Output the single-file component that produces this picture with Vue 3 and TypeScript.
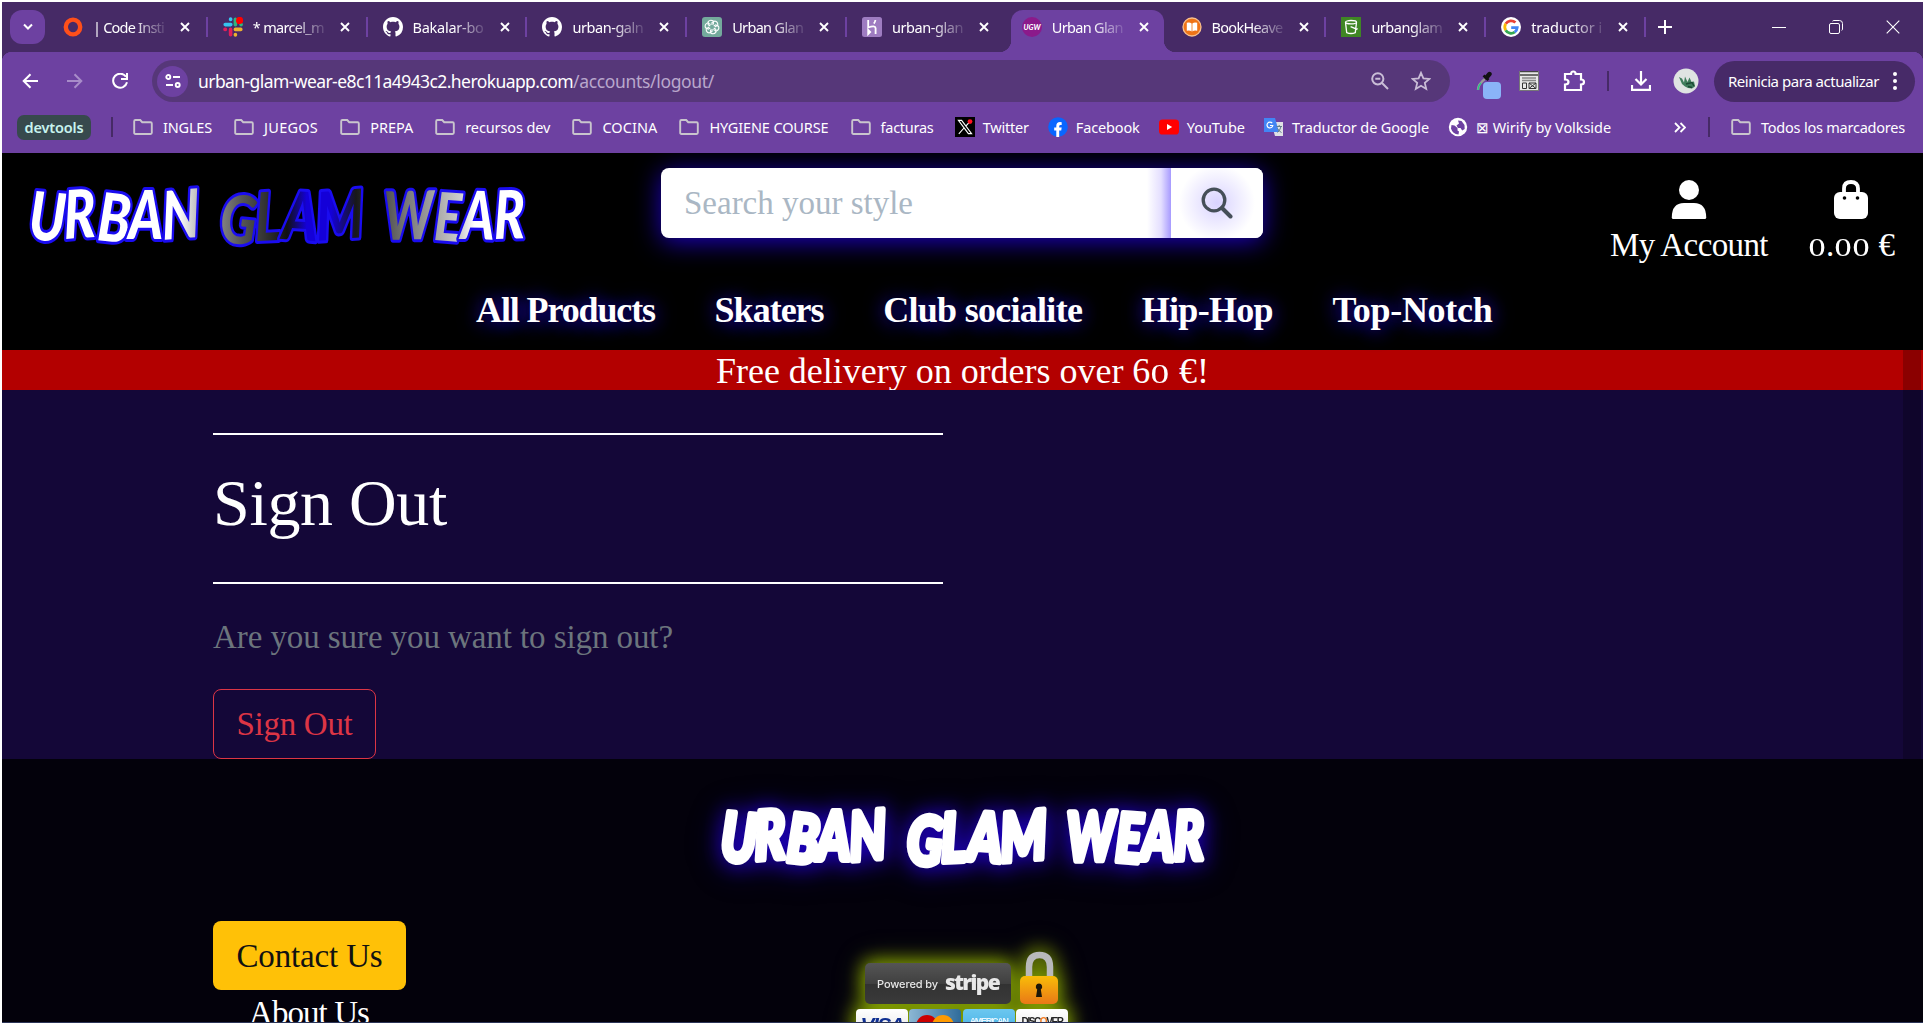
<script setup lang="ts">
interface Tab { title: string; icon: string; active?: boolean; line?: boolean }
interface Bookmark { label: string; icon: string; width: number }

const tabs: Tab[] = [
  { title: '| Code Insti', icon: 'ring', line: true },
  { title: '* marcel_m', icon: 'slack', line: true },
  { title: 'Bakalar-bo', icon: 'github', line: true },
  { title: 'urban-galn', icon: 'github', line: true },
  { title: 'Urban Glan', icon: 'gpt', line: true },
  { title: 'urban-glan', icon: 'heroku' },
  { title: 'Urban Glan', icon: 'ugw', active: true },
  { title: 'BookHeave', icon: 'book', line: true },
  { title: 'urbanglam', icon: 'bucket', line: true },
  { title: 'traductor i', icon: 'google', line: true },
]

const bookmarks: Bookmark[] = [
  { label: 'INGLES', icon: 'folder', width: 49 },
  { label: 'JUEGOS', icon: 'folder', width: 54 },
  { label: 'PREPA', icon: 'folder', width: 43 },
  { label: 'recursos dev', icon: 'folder', width: 85 },
  { label: 'COCINA', icon: 'folder', width: 55 },
  { label: 'HYGIENE COURSE', icon: 'folder', width: 119 },
  { label: 'facturas', icon: 'folder', width: 53 },
  { label: 'Twitter', icon: 'x', width: 46 },
  { label: 'Facebook', icon: 'facebook', width: 64 },
  { label: 'YouTube', icon: 'youtube', width: 58 },
  { label: 'Traductor de Google', icon: 'translate', width: 137 },
  { label: '⊠ Wirify by Volkside', icon: 'globe', width: 135 },
]

const nav = [
  { label: 'All Products', width: 179 },
  { label: 'Skaters', width: 109 },
  { label: 'Club socialite', width: 199 },
  { label: 'Hip-Hop', width: 131 },
  { label: 'Top-Notch', width: 160 },
]

// Tracks a line of text so that it takes exactly the given width.
const vFit = {
  mounted(el: HTMLElement, binding: { value: number }) {
    const n = (el.textContent ?? '').trim().length
    const w = el.getBoundingClientRect().width
    el.style.letterSpacing = `${(binding.value - w) / n}px`
  },
}
</script>

<template>
  <div class="window">
    <svg class="defs" width="0" height="0">
      <defs>
        <linearGradient id="logoFill" x1="30" x2="524" y1="0" y2="0" gradientUnits="userSpaceOnUse">
          <stop offset="0" stop-color="#fff" /><stop offset=".3" stop-color="#fff" />
          <stop offset=".35" stop-color="#aaa" /><stop offset=".43" stop-color="#555" />
          <stop offset=".52" stop-color="#111" /><stop offset=".56" stop-color="#1400d8" />
          <stop offset=".61" stop-color="#1400d8" /><stop offset=".66" stop-color="#181818" />
          <stop offset=".76" stop-color="#777" /><stop offset=".87" stop-color="#ccc" />
          <stop offset=".9" stop-color="#fff" /><stop offset="1" stop-color="#fff" />
        </linearGradient>
        <linearGradient id="lockFill" x1="0" x2="0" y1="0" y2="1">
          <stop offset="0" stop-color="#f9bd08" /><stop offset="1" stop-color="#e97817" />
        </linearGradient>
        <symbol id="folder" viewBox="0 0 20 20"><path d="M1.2 4.2q0-1.2 1.2-1.2h4.8l2 2.2h8.4q1.2 0 1.2 1.2v9.4q0 1.2-1.2 1.2H2.4q-1.2 0-1.2-1.2z" fill="none" stroke="#c9c5cd" stroke-width="1.9" /></symbol>
        <symbol id="ring" viewBox="0 0 20 20"><ellipse cx="10" cy="10" rx="7.2" ry="7.4" fill="none" stroke="#ff4f1a" stroke-width="4.4" /></symbol>
        <symbol id="slack" viewBox="0 0 20 20">
          <g stroke-width="3.6" stroke-linecap="round">
            <path d="M2.2 7.6h5.6M7.6 2v.4" stroke="#36c5f0" /><path d="M12.4 2.4v5.4M18 7.6h.2" stroke="#2eb67d" />
            <path d="M12.4 12.4h5.4M12.4 17.6v.3" stroke="#ecb22e" /><path d="M7.6 12.4v5.4M2 12.4h.4" stroke="#e01e5a" />
          </g>
          <circle cx="16.6" cy="3.4" r="3.6" fill="#f00" />
        </symbol>
        <symbol id="github" viewBox="0 0 16 16"><path fill="#fff" d="M8 0C3.58 0 0 3.58 0 8c0 3.54 2.29 6.53 5.47 7.59.4.07.55-.17.55-.38 0-.19-.01-.82-.01-1.49-2.01.37-2.53-.49-2.69-.94-.09-.23-.48-.94-.82-1.13-.28-.15-.68-.52-.01-.53.63-.01 1.08.58 1.23.82.72 1.21 1.87.87 2.33.66.07-.52.28-.87.51-1.07-1.78-.2-3.64-.89-3.64-3.95 0-.87.31-1.59.82-2.15-.08-.2-.36-1.02.08-2.12 0 0 .67-.21 2.2.82.64-.18 1.32-.27 2-.27s1.36.09 2 .27c1.53-1.04 2.2-.82 2.2-.82.44 1.1.16 1.92.08 2.12.51.56.82 1.27.82 2.15 0 3.07-1.87 3.75-3.65 3.95.29.25.54.73.54 1.48 0 1.07-.01 1.93-.01 2.2 0 .21.15.46.55.38A8.01 8.01 0 0 0 16 8c0-4.42-3.58-8-8-8z" /></symbol>
        <symbol id="gpt" viewBox="0 0 20 20"><rect width="20" height="20" rx="3" fill="#74aa9c" /><g fill="none" stroke="#fff" stroke-width="1.1"><path id="petal" d="M10 8V5.6l2.8-1.600q3.200.6 3 4.200l-3 1.800" /><use href="#petal" transform="rotate(60 10 10)" /><use href="#petal" transform="rotate(120 10 10)" /><use href="#petal" transform="rotate(180 10 10)" /><use href="#petal" transform="rotate(240 10 10)" /><use href="#petal" transform="rotate(300 10 10)" /></g></symbol>
        <symbol id="heroku" viewBox="0 0 20 20"><rect width="20" height="20" rx="2.5" fill="#9e7cc1" /><path d="M6.2 3v7.5q7-2.6 7.4.7V17M13.4 3q-.2 2-1.6 3.6M6.2 13v4l2-2z" fill="none" stroke="#fff" stroke-width="1.8" /></symbol>
        <symbol id="ugw" viewBox="0 0 20 20"><circle cx="10" cy="10" r="10" fill="#8b1a8b" /><text x="1.5" y="12.8" font-family="Lato, sans-serif" font-weight="900" font-style="italic" font-size="8" textLength="17" lengthAdjust="spacingAndGlyphs" fill="#fff">UGW</text></symbol>
        <symbol id="book" viewBox="0 0 20 20"><circle cx="10" cy="10" r="9" fill="#ef7416" stroke="#f9c08c" stroke-width="1.3" /><path d="M4.8 5.8q3-.8 4.8.6v8q-1.800-1.400-4.800-.6zM15.200 5.800q-3-.8-4.800.6v8q1.800-1.400 4.800-.6z" fill="#fff" /></symbol>
        <symbol id="bucket" viewBox="0 0 20 20"><rect width="20" height="20" fill="#3f8624" /><path d="M4.500 5.400l1.200 10.200q4.300 1.800 8.600 0L15.500 5.400M9.600 9.600l6 2.600 1-.8" fill="none" stroke="#fff" stroke-width="1.3" /><ellipse cx="10" cy="5.2" rx="5.500" ry="1.700" fill="none" stroke="#fff" stroke-width="1.3" /></symbol>
        <symbol id="google" viewBox="0 0 20 20"><circle cx="10" cy="10" r="10" fill="#fff" /><g fill="none" stroke-width="2.8"><path d="M14.4 5.6A6.2 6.2 0 0 0 4.7 6.8" stroke="#ea4335" /><path d="M4.7 6.8a6.2 6.2 0 0 0 0 6.4" stroke="#fbbc05" /><path d="M4.7 13.2a6.2 6.2 0 0 0 9 1.9" stroke="#34a853" /><path d="M13.7 15.1a6.2 6.2 0 0 0 2.5-4.5H10.2" stroke="#4285f4" /></g></symbol>
        <symbol id="x" viewBox="0 0 20 20"><rect width="20" height="20" fill="#000" /><path d="M3.4 3.4h3.2l10 13.2h-3.2zM16 3.4l-5.2 5.8M9 11l-5.2 5.8" fill="none" stroke="#fff" stroke-width="1.1" /><circle cx="15" cy="4.6" r="2.4" fill="#f12" /></symbol>
        <symbol id="facebook" viewBox="0 0 20 20"><circle cx="10" cy="10" r="9.8" fill="#0866ff" /><path d="M8.3 20v-6.6H6.2v-3h2.1V9q0-3.9 3.8-3.9l1.6.2v2.6h-1.2q-1.3 0-1.3 1.3v1.2h2.5l-.5 3h-2V20z" fill="#fff" /></symbol>
        <symbol id="youtube" viewBox="0 0 20 20"><rect y="2.5" width="20" height="15" rx="3.6" fill="#f00" /><path d="M8 7l5.2 3L8 13z" fill="#fff" /></symbol>
        <symbol id="translate" viewBox="0 0 20 20"><path d="M7 5h12v14H11z" fill="#dfe1e5" /><path d="M0 1h11l4 14H0z" fill="#4285f4" /><path d="M8.2 6.2a2.9 2.9 0 1 0 .6 2.3H6" fill="none" stroke="#fff" stroke-width="1.2" /><path d="M12.5 9.5h5.5M15.2 8v1.5M17 9.5q-1 4-3.5 6M13.5 11.5q1.5 3 4 4" fill="none" stroke="#607d8b" stroke-width="1" /></symbol>
        <symbol id="globe" viewBox="0 0 20 20"><circle cx="10" cy="10" r="9.2" fill="#fff" /><path d="M3.5 8l3 .5 3 2.500 0 2.500 1.500 1-.5 3q-6-.5-7.500-6zM10 3.500l3.500.5 3 4 .2 4-2.500 1.500-1.700-2.500h-2.500L8.500 8.500l2.500-2z" fill="#6d41a1" /></symbol>
      </defs>
    </svg>

    <div class="tabstrip">
      <div class="tabsearch"><svg width="12" height="8" viewBox="0 0 12 8"><path d="M2 1.5l4 4 4-4" fill="none" stroke="#fff" stroke-width="2" /></svg></div>
      <div class="tabs">
        <div v-for="(t, i) in tabs" :key="i" class="tab" :class="{ active: t.active, line: t.line }">
          <svg class="fav" width="20" height="20"><use :href="`#${t.icon}`" /></svg>
          <div class="title"><span v-fit="71">{{ t.title }}</span></div>
          <svg class="close" width="10" height="10" viewBox="0 0 10 10"><path d="M1 1l8 8M9 1l-8 8" stroke="#fff" stroke-width="1.9" /></svg>
        </div>
      </div>
      <svg class="plus" width="14" height="14" viewBox="0 0 14 14"><path d="M7 0v14M0 7h14" stroke="#fff" stroke-width="2" /></svg>
      <div class="controls">
        <svg width="14" height="14" viewBox="0 0 14 14"><path d="M0 7.5h14" stroke="#fff" /></svg>
        <svg width="14" height="14" viewBox="0 0 14 14"><path d="M.5 5q0-1.5 1.5-1.5h7q1.5 0 1.5 1.5v7q0 1.5-1.5 1.5H2Q.5 13.5.5 12zM3.5 1.2Q4 .5 5 .5h5.5q3 0 3 3V9q0 1-.8 1.5" fill="none" stroke="#fff" /></svg>
        <svg width="14" height="14" viewBox="0 0 14 14"><path d="M.7.7l12.6 12.6M13.3.7L.7 13.3" stroke="#fff" stroke-width="1.1" /></svg>
      </div>
    </div>

    <div class="chrome">
      <div class="toolbar">
        <div class="navbtns">
          <svg width="16" height="16" viewBox="0 0 16 16"><path d="M16 8H2M8.5 1.2L1.7 8l6.8 6.8" fill="none" stroke="#fff" stroke-width="2" /></svg>
          <svg width="16" height="16" viewBox="0 0 16 16"><path d="M0 8h14M7.5 1.2L14.3 8l-6.8 6.8" fill="none" stroke="#a88cc9" stroke-width="2" /></svg>
          <svg width="16" height="16" viewBox="0 0 16 16"><path d="M14 3.8A7 7 0 1 0 15 9.3M15 0v6H9" fill="none" stroke="#fff" stroke-width="2" /></svg>
        </div>
        <div class="omnibox">
          <div class="site"><svg width="16" height="14" viewBox="0 0 16 14" fill="none" stroke="#fff" stroke-width="1.9"><circle cx="3.3" cy="3" r="2" /><path d="M8 3h7M1 11h7" /><circle cx="12.7" cy="11" r="2" /></svg></div>
          <span v-fit="375" class="host">urban-glam-wear-e8c11a4943c2.herokuapp.com</span><span v-fit="141" class="path">/accounts/logout/</span>
          <svg class="glass" width="18" height="18" viewBox="0 0 18 18" fill="none" stroke="#c9bdd6" stroke-width="2"><circle cx="6.8" cy="6.8" r="5.6" /><path d="M11 11l6 6M4.3 6.8h5" /></svg>
          <svg width="20" height="20" viewBox="0 0 20 20" fill="none" stroke="#c9bdd6" stroke-width="1.8"><path d="M10 1.8l2.4 5.6 6 .5-4.6 4 1.4 6-5.2-3.2-5.2 3.2 1.4-6-4.6-4 6-.5z" /></svg>
        </div>
        <svg class="dropper" width="26" height="28" viewBox="0 0 26 28"><path d="M3 19q0-6 7.5-11.5" fill="none" stroke="#999" stroke-width="2.4" /><path d="M3 19q0-4 3-7" fill="none" stroke="#2c8" stroke-width="1.3" /><path d="M8.5 4.5l5 4.5" stroke="#111" stroke-width="2.6" /><path d="M11.5 6.5l3-3.5" stroke="#111" stroke-width="4.4" stroke-linecap="round" /><rect x="8" y="11" width="18" height="17" rx="4" fill="#8ab4f8" /></svg>
        <svg class="wire" width="20" height="20" viewBox="0 0 20 20"><rect width="20" height="20" fill="#e8e8e8" /><path d="M0 .7h20M1 4h18" stroke="#444" stroke-width="1.3" /><path d="M3 7h14M3 9.5h14" stroke="#888" stroke-width="1.3" /><path d="M3.5 12h4v5.500h-4zM10 12h7v5.500h-7zl7 5.500M17 12l-7 5.500" fill="none" stroke="#333" /><path d="M.5 0v20M19.5 0v20M0 19.5h20" stroke="#777" /></svg>
        <svg class="puzzle" width="24" height="22" viewBox="0 0 24 22"><path d="M2 4h6q0-2.5 2.3-2.5T12.6 4H18v5.5q3 0 3 2.5t-3 2.5V20H2v-5.5q3.5 0 3.5-2.5T2 9.5z" fill="none" stroke="#fff" stroke-width="2.2" /></svg>
        <i class="sep tb" />
        <svg class="down" width="20" height="20" viewBox="0 0 20 20"><path d="M10 0v13M4.5 8L10 13.5 15.5 8M1 14v4.8h18V14" fill="none" stroke="#fff" stroke-width="2.2" /></svg>
        <svg class="avatar" width="26" height="26" viewBox="0 0 26 26"><circle cx="13" cy="13" r="12.5" fill="#dfe4e2" /><path d="M6 9l3 1.500 2 4 1-6 2.500 5.500 2-4.500 2 4.500 2.500-.5 1 5-3 2-4-.5-3-1.500-3-2.500z" fill="#3f7d5c" /><path d="M13 16l6-1.500 2 3.500M15 18.500l4 1" fill="none" stroke="#1d4a35" stroke-width="1.5" /></svg>
        <div class="update"><span v-fit="151">Reinicia para actualizar</span><svg width="4" height="18" viewBox="0 0 4 18" fill="#fff"><circle cx="2" cy="2" r="2" /><circle cx="2" cy="9" r="2" /><circle cx="2" cy="16" r="2" /></svg></div>
      </div>

      <div class="bookmarks">
        <div class="group"><span v-fit="59">devtools</span></div>
        <i class="sep" />
        <div class="marks">
          <div v-for="b in bookmarks" :key="b.label" class="mark" :class="{ site: b.icon !== 'folder' }">
            <svg width="20" height="20"><use :href="`#${b.icon}`" /></svg><span v-fit="b.width">{{ b.label }}</span>
          </div>
        </div>
        <svg class="more" width="12" height="11" viewBox="0 0 12 11"><path d="M1 1l4.5 4.5L1 10M6.5 1L11 5.5 6.5 10" fill="none" stroke="#fff" stroke-width="1.8" /></svg>
        <i class="sep end" />
        <div class="mark"><svg width="20" height="20"><use href="#folder" /></svg><span v-fit="144">Todos los marcadores</span></div>
      </div>
    </div>

    <div class="page">
      <header>
        <svg class="logo" width="504" height="80" viewBox="25 175 504 80">
          <g class="graffiti" fill="url(#logoFill)" stroke="#1a0cf0" stroke-width="6">
            <text x="28" y="239" textLength="173" lengthAdjust="spacingAndGlyphs" rotate="4 -3 5 0 -4" dy="0 0 1 -1 1">URBAN</text>
            <text x="219" y="240" textLength="146" lengthAdjust="spacingAndGlyphs" rotate="4 -2 3 -4" dy="2 -1 -2 2">GLAM</text>
            <text x="384" y="240" textLength="141" lengthAdjust="spacingAndGlyphs" rotate="-1 3 1 -1" dy="0 0 -1 0">WEAR</text>
          </g>
        </svg>
        <div class="search">
          <div class="field"><span v-fit="229">Search your style</span></div>
          <div class="go"><svg width="32" height="32" viewBox="0 0 32 32" fill="none" stroke="#454f58"><circle cx="13" cy="13" r="10.8" stroke-width="3.3" /><path d="M21 21l8.5 8.5" stroke-width="4" stroke-linecap="round" /></svg></div>
        </div>
        <div class="account">
          <div><svg width="36" height="40" viewBox="0 0 36 40" fill="#fff"><circle cx="18" cy="10" r="10" /><path d="M.8 37.5Q.8 23 13 23h10q12.2 0 12.2 14.5 0 1.5-1.5 1.5H2.3Q.8 39 .8 37.5z" /></svg><span v-fit="158">My Account</span></div>
          <div><svg width="36" height="40" viewBox="0 0 36 40"><path d="M11 13V8.5q0-6.5 7-6.5t7 6.5V13" fill="none" stroke="#fff" stroke-width="3.8" /><rect x="1" y="12" width="34" height="27" rx="6" fill="#fff" /><circle cx="11.5" cy="18" r="1.8" /><circle cx="24.5" cy="18" r="1.8" /></svg><span v-fit="87"><b class="osf">0</b>.<b class="osf">0</b><b class="osf">0</b> €</span></div>
        </div>
        <nav><a v-for="n in nav" :key="n.label" v-fit="n.width">{{ n.label }}</a></nav>
      </header>
      <div class="banner"><span v-fit="493">Free delivery on orders over 6<b class="osf">0</b> €!</span></div>
      <main>
        <hr>
        <h2><span v-fit="234">Sign Out</span></h2>
        <hr>
        <p><span v-fit="460">Are you sure you want to sign out?</span></p>
        <button class="danger"><span v-fit="116">Sign Out</span></button>
      </main>
      <footer>
        <svg class="flogo" width="560" height="110" viewBox="-38 -22 560 110">
          <g class="graffiti" fill="#fff" stroke="#fff" stroke-width="6">
            <text x="0" y="56" textLength="167" lengthAdjust="spacingAndGlyphs" rotate="4 -3 5 0 -4" dy="0 0 1 -1 1">URBAN</text>
            <text x="186" y="57" textLength="142" lengthAdjust="spacingAndGlyphs" rotate="4 -2 3 -4" dy="2 -1 -2 2">GLAM</text>
            <text x="347" y="57" textLength="137" lengthAdjust="spacingAndGlyphs" rotate="-1 3 1 -1" dy="0 0 -1 0">WEAR</text>
          </g>
        </svg>
        <div class="cols">
          <div class="links">
            <button class="contact"><span v-fit="146">Contact Us</span></button>
            <div class="about"><span v-fit="120">About Us</span></div>
          </div>
          <div class="pay">
            <div class="top">
              <div class="stripe"><span v-fit="61">Powered by</span><b v-fit="54">stripe</b></div>
              <svg width="38" height="53" viewBox="0 0 38 53"><path d="M9 28V16q0-12 10.5-12T30 16v12" fill="none" stroke="#b9b9bb" stroke-width="6.5" /><rect y="25" width="38" height="28" rx="5" fill="url(#lockFill)" /><path d="M19 32.5a3.3 3.3 0 0 1 1.8 6L22 46h-6l1.2-7.5a3.3 3.3 0 0 1 1.8-6z" fill="#1d1708" /></svg>
            </div>
            <div class="cards">
              <div class="card visa"><b v-fit="43">VISA</b></div>
              <div class="card mc"><i /><i /></div>
              <div class="card amex"><b v-fit="38">AMERICAN</b></div>
              <div class="card disc"><b v-fit="41">DISC<em>O</em>VER</b></div>
            </div>
          </div>
        </div>
      </footer>
      <div class="scroll" />
    </div>
  </div>
</template>

<style>
body { margin: 0; background: #fff; overflow: hidden; }
</style>

<style scoped>
* { box-sizing: border-box; }
.window { width: 1925px; height: 1025px; padding: 2px; display: flex; flex-direction: column; overflow: hidden; background: #fff; color: #fff; font-family: "Noto Sans", "Open Sans", sans-serif; font-size: 15px; white-space: nowrap; }
.window span, .window a { display: inline-block; }
.defs { position: absolute; }
svg { flex: none; display: block; }
.tabstrip { height: 50px; flex: none; background: #462a66; display: flex; padding-left: 8px; }
.tabsearch { width: 35px; height: 34px; margin-top: 8px; border-radius: 12px; background: #6d41a1; display: flex; align-items: center; justify-content: center; }
.tabs { display: flex; margin-left: 6px; }
.tab { position: relative; width: 159.8px; height: 50px; padding: 0 11px 0 12px; display: flex; align-items: center; }
.tab.line::after { content: ""; position: absolute; right: 3px; top: 15px; width: 2px; height: 20px; background: #6d41a1; }
.fav { position: relative; z-index: 1; }
.title { position: relative; z-index: 1; width: 72px; margin-left: 10px; font-size: 14.5px; line-height: 24px; -webkit-mask-image: linear-gradient(90deg, #000 55%, rgba(0, 0, 0, .12) 100%); mask-image: linear-gradient(90deg, #000 55%, rgba(0, 0, 0, .12) 100%); }
.close { margin-left: 15px; position: relative; z-index: 1; }
.tab.active::before { content: ""; position: absolute; left: 1px; top: 8px; width: 153px; height: 42px; background: #6d41a1; border-radius: 12px 12px 0 0; }
.tab.active::after { content: ""; position: absolute; left: -11px; bottom: 0; width: 177px; height: 12px; background: radial-gradient(circle at 0 0, transparent 12px, #6d41a1 12.5px) 0 0 / 12px 12px no-repeat, radial-gradient(circle at 100% 0, transparent 12px, #6d41a1 12.5px) 100% 0 / 12px 12px no-repeat; }
.plus { margin: 18px 0 0 9px; }
.controls { display: flex; gap: 43px; margin: 18px 0 0 100px; }
.chrome { height: 101px; flex: none; background: #6d41a1; position: relative; }
.chrome::before { content: ""; position: absolute; inset: 0 0 auto; height: 12px; background: radial-gradient(circle at 100% 100%, transparent 10px, #462a66 10.5px) 0 0 / 10px 10px no-repeat, radial-gradient(circle at 0 100%, transparent 10px, #462a66 10.5px) 100% 0 / 10px 10px no-repeat; }
.toolbar { display: flex; align-items: center; height: 58px; padding-left: 20px; }
.navbtns { display: flex; gap: 29px; width: 130px; }
.omnibox { width: 1298px; height: 42px; border-radius: 21px; background: #563779; display: flex; align-items: center; padding: 0 19px 0 5px; font-size: 17.5px; }
.omnibox .site { width: 31px; height: 31px; border-radius: 50%; background: #6d41a1; display: flex; align-items: center; justify-content: center; margin-right: 10px; }
.path { color: #b9a8cc; }
.glass { margin-left: auto; margin-right: 22px; }
.dropper { margin: 8px 0 0 25px; }
.wire { margin-left: 18px; }
.puzzle { margin-left: 24px; }
.sep { width: 2px; height: 20px; background: #462a66; flex: none; }
.sep.tb { margin-left: 20px; }
.down { margin-left: 22px; }
.avatar { margin-left: 22px; }
.update { margin-left: 15px; width: 201px; height: 41px; border-radius: 21px; background: #472a68; display: flex; align-items: center; padding-left: 14px; gap: 14px; }
.bookmarks { display: flex; align-items: center; height: 34px; font-size: 14.5px; padding-left: 15px; }
.group { width: 74px; height: 25px; border-radius: 7px; background: #37494d; color: #c8f3ee; display: flex; align-items: center; justify-content: center; font-weight: 600; margin-right: 20px; }
.marks { display: flex; gap: 22.1px; margin-left: 20px; width: 1475px; }
.mark { display: flex; align-items: center; gap: 10px; }
.mark.site { gap: 8px; margin-left: -3px; }
.mark.site:nth-child(8) { margin-left: -1px; }
.more { margin-left: 66px; }
.sep.end { margin: 0 21px 0 22px; }
.page { position: relative; flex: 1; min-height: 0; overflow: hidden; background: #03010b; border-bottom: 1px solid #2c3558; font-family: "Liberation Serif", serif; font-size: 33px; }
header { position: relative; height: 197px; background: #000; display: grid; grid-template-columns: 659px 602px 1fr; grid-template-rows: 110px 87px; }
.logo { margin: 22px 0 0 23px; overflow: visible; }
.graffiti { font-family: Lato, "Open Sans", sans-serif; font-weight: 900; font-style: italic; font-size: 67px; stroke-linejoin: round; paint-order: stroke; }
.search { margin-top: 15px; height: 70px; display: flex; border-radius: 8px; background: #fff; box-shadow: 0 4px 26px rgba(38, 0, 255, .75); }
.field { width: 510px; padding-left: 23px; color: #aab7c4; display: flex; align-items: center; background: linear-gradient(90deg, transparent calc(100% - 24px), #e4dfff calc(100% - 10px), #a79aff); border-radius: 8px 0 0 8px; }
.go { flex: 1; display: flex; align-items: center; justify-content: center; border-radius: 0 8px 8px 0; background: radial-gradient(circle, #d9d3ff, #fff 38px); }
.account { display: flex; justify-content: flex-end; gap: 40px; padding: 27px 28px 0 0; }
.account > div { display: flex; flex-direction: column; align-items: center; }
.account span { line-height: 40px; margin-top: 5px; font-size: 33px; }
.osf { display: inline-block; font-weight: 400; font-size: .74em; line-height: 1; transform: scaleX(1.4); padding: 0 .12em; letter-spacing: 0; }
nav { grid-column: 1 / -1; display: flex; gap: 59.6px; padding-left: 474px; font-weight: bold; font-size: 36px; line-height: 44px; padding-top: 25px; text-shadow: 0 0 20px rgba(50, 16, 255, .6), 0 4px 20px rgba(42, 0, 216, .45); }
.banner { height: 40px; background: #b30000; text-align: center; font-size: 36px; line-height: 42px; overflow: hidden; }
main { height: 369px; background: #140738; padding: 43px 0 0 211px; }
hr { width: 730px; height: 2px; border: 0; background: #fff; margin: 0; }
h2 { font-weight: 400; font-size: 66px; line-height: 80px; margin: 0; padding: 28px 0 0; height: 147px; color: #fff; }
p { margin: 0; height: 105px; padding-top: 33px; line-height: 40px; color: #6c757d; font-size: 33px; }
button { font: inherit; display: flex; align-items: center; justify-content: center; padding: 0; height: 70px; border-radius: 8px; }
.danger { width: 163px; background: none; border: 1px solid #dc3545; color: #dc3545; }
footer { display: flex; flex-direction: column; height: 264px; }
.flogo { margin: 23px 0 0 680px; filter: drop-shadow(0 0 10px rgba(38, 0, 255, .6)) drop-shadow(0 3px 12px rgba(34, 0, 200, .5)); }
.cols { display: flex; margin-top: 29px; padding-left: 211px; }
.links { width: 643px; }
.contact { width: 193px; height: 69px; border: 0; background: #ffc107; color: #111; padding-top: 2px; }
.about { margin: 3px 0 0 36px; line-height: 40px; }
.pay { width: 212px; margin-top: 30px; filter: drop-shadow(0 0 9px rgba(143, 174, 0, .85)) drop-shadow(0 0 10px rgba(125, 154, 0, .7)); font-family: "Liberation Sans", sans-serif; }
.top { display: flex; align-items: flex-end; gap: 9px; padding-left: 9px; }
.stripe { width: 146px; height: 41px; border-radius: 5px; background: linear-gradient(#555, #404040 50%, #323232 50%, #3a3a3a); display: flex; align-items: center; padding-left: 12px; gap: 7px; color: #e8e8e8; font-size: 11px; font-family: Inter, sans-serif; font-weight: 500; }
.stripe b { font-family: "Open Sans", sans-serif; font-weight: 800; font-size: 21px; line-height: 30px; padding-bottom: 4px; }
.stripe b, .card b { display: inline-block; }
.cards { display: flex; gap: 1.5px; margin-top: 5px; }
.card { width: 52px; height: 33px; border-radius: 4px 4px 0 0; background: linear-gradient(#fff, #ddd); display: flex; justify-content: center; overflow: hidden; padding-top: 7px; line-height: 18px; }
.visa b { color: #0f2f91; font-size: 21px; font-style: italic; }
.mc { background: linear-gradient(90deg, #8cb7d4, #2f6c9b); padding-top: 6px; }
.mc i { width: 22px; height: 22px; border-radius: 50%; background: #c00; margin: 0 -3px; }
.mc i + i { background: #ff9a00; }
.amex { background: linear-gradient(#6cc7f0, #35a8e0); }
.amex b { color: #e9f7ff; font-size: 9px; line-height: 10px; }
.disc b { color: #222; font-size: 10px; line-height: 11px; }
.disc em { color: #f47b20; font-style: normal; }
.scroll { position: absolute; right: 2px; top: 197px; width: 18px; height: 409px; background: rgba(0, 0, 0, .22); }
</style>
